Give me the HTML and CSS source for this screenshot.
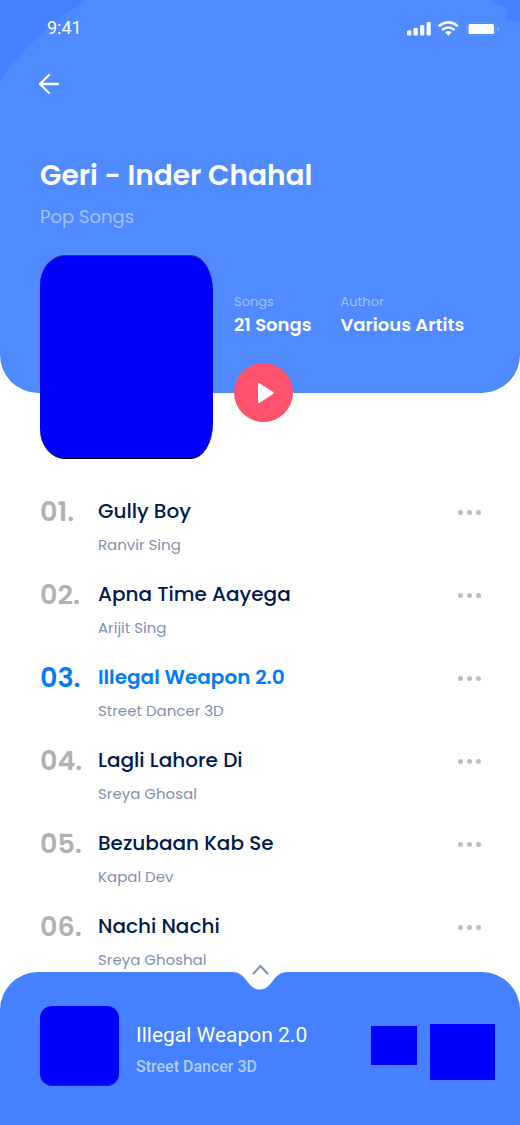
FILE: index.html
```html
<!DOCTYPE html>
<html lang="en">
<head>
<meta charset="utf-8">
<meta name="viewport" content="width=device-width, initial-scale=1">
<title>Geri - Inder Chahal</title>
<link rel="stylesheet" href="styles.css">
</head>
<body>
<div class="app">
  <header class="hero">
    <svg class="corner corner-left" width="86" height="82" viewBox="0 0 86 82" aria-hidden="true"><path d="M0 0H86C53 21 23 47 0 81Z" fill="#4480ff"/></svg>
    <svg class="corner corner-right" width="30" height="22" viewBox="0 0 30 22" aria-hidden="true"><path d="M0 0C3 5 12 3 15 8C18 13 14 19 19 21H30V0Z" fill="#4480ff"/></svg>
    <div class="status">
      <span class="time">9:41</span>
      <svg class="status-icons" width="94" height="16" viewBox="0 0 94 16" aria-hidden="true">
        <g fill="#fff">
          <rect x="1" y="9.500" width="4.300" height="5" rx="1"/>
          <rect x="7.500" y="7" width="4.300" height="7.500" rx="1"/>
          <rect x="14" y="4" width="4.300" height="10.500" rx="1"/>
          <rect x="20.500" y="1" width="4.300" height="13.500" rx="1"/>
          <path d="M39 11.200Q42.300 9 45.600 11.200L42.300 14.800Z"/>
          <rect x="62.500" y="3" width="25.500" height="10" rx="1.500"/>
        </g>
        <path d="M32.800 5.200Q42.300-2.400 51.800 5.200M36 9Q42.300 4 48.600 9" fill="none" stroke="#fff" stroke-width="2.500"/>
        <rect x="60.500" y="1.500" width="29" height="13" rx="3" fill="none" stroke="#fff" stroke-opacity=".12"/>
        <path d="M91.500 5.500Q94.500 8 91.500 10.500Z" fill="#fff" fill-opacity=".4"/>
      </svg>
    </div>
    <button class="back" type="button" aria-label="Back">
      <svg width="22" height="22" viewBox="0 0 22 22" aria-hidden="true"><path d="M20 11H2M11 2L2 11L11 20" fill="none" stroke="#fff" stroke-width="2.300" stroke-linecap="round" stroke-linejoin="round"/></svg>
    </button>
    <h1 class="album-title">Geri - Inder Chahal</h1>
    <p class="genre">Pop Songs</p>
    <div class="album">
      <div class="cover" role="img" aria-label="Album cover"></div>
      <div class="album-info">
        <dl class="facts">
          <div class="fact"><dt>Songs</dt><dd>21 Songs</dd></div>
          <div class="fact"><dt>Author</dt><dd>Various Artits</dd></div>
        </dl>
        <button class="play" type="button" aria-label="Play album">
          <svg width="18" height="22" viewBox="0 0 18 22" aria-hidden="true"><path d="M2 2V20L16 11Z" fill="#fff" stroke="#fff" stroke-width="2" stroke-linejoin="round"/></svg>
        </button>
      </div>
    </div>
  </header>

  <main>
    <ol class="tracks">
      <li class="track"><span class="number">01.</span><div class="song"><h2>Gully Boy</h2><p>Ranvir Sing</p></div><button class="more" type="button" aria-label="More options for Gully Boy"><i></i><i></i><i></i></button></li>
      <li class="track"><span class="number">02.</span><div class="song"><h2>Apna Time Aayega</h2><p>Arijit Sing</p></div><button class="more" type="button" aria-label="More options for Apna Time Aayega"><i></i><i></i><i></i></button></li>
      <li class="track current"><span class="number">03.</span><div class="song"><h2>Illegal Weapon 2.0</h2><p>Street Dancer 3D</p></div><button class="more" type="button" aria-label="More options for Illegal Weapon 2.0"><i></i><i></i><i></i></button></li>
      <li class="track"><span class="number">04.</span><div class="song"><h2>Lagli Lahore Di</h2><p>Sreya Ghosal</p></div><button class="more" type="button" aria-label="More options for Lagli Lahore Di"><i></i><i></i><i></i></button></li>
      <li class="track"><span class="number">05.</span><div class="song"><h2>Bezubaan Kab Se</h2><p>Kapal Dev</p></div><button class="more" type="button" aria-label="More options for Bezubaan Kab Se"><i></i><i></i><i></i></button></li>
      <li class="track"><span class="number">06.</span><div class="song"><h2>Nachi Nachi</h2><p>Sreya Ghoshal</p></div><button class="more" type="button" aria-label="More options for Nachi Nachi"><i></i><i></i><i></i></button></li>
    </ol>
  </main>

  <footer class="player">
    <button class="expand" type="button" aria-label="Open player">
      <svg width="56" height="28" viewBox="0 0 56 28" aria-hidden="true">
        <path d="M0 10C15 10 15 27.500 28 27.500C41 27.500 40 10 56 10V9H0Z" fill="#fff"/>
        <path d="M21.500 11.500L28.500 4L35.500 11.500" fill="none" stroke="#8190b0" stroke-width="2" stroke-linecap="round"/>
      </svg>
    </button>
    <div class="thumb" role="img" aria-label="Album cover"></div>
    <div class="now">
      <p class="now-title">Illegal Weapon 2.0</p>
      <p class="now-album">Street Dancer 3D</p>
    </div>
    <div class="controls">
      <button class="pause" type="button" aria-label="Pause"></button>
      <button class="next" type="button" aria-label="Next"></button>
    </div>
  </footer>
</div>
</body>
</html>
```

FILE: styles.css
```css
* {
  box-sizing: border-box;
}

body,
h1,
h2,
p,
dl,
dd,
ol {
  margin: 0;
  padding: 0;
}

body {
  background: #fff;
  color: #001a4f;
  font-family: Poppins, Inter, sans-serif;
}

button {
  display: flex;
  align-items: center;
  justify-content: center;
  padding: 0;
  border: 0;
  background: none;
  cursor: pointer;
}

.app {
  display: flex;
  flex-direction: column;
  min-height: 100vh;
}

.hero {
  position: relative;
  display: flex;
  flex-direction: column;
  padding: 0 20px 0 40px;
  border-radius: 0 0 38px 38px;
  background: #4f8aff;
  color: #fff;
}

.corner {
  position: absolute;
  top: 0;
}

.corner-left {
  left: 0;
}

.corner-right {
  right: 0;
}

.status {
  position: relative;
  display: flex;
  align-items: center;
  justify-content: space-between;
  height: 56px;
  padding-left: 7px;
}

.time {
  font: 18px/24px Roboto, sans-serif;
}

.status-icons {
  margin-top: 2px;
}

.back {
  position: relative;
  align-self: flex-start;
  width: 40px;
  height: 40px;
  margin: 8px 0 0 -11px;
}

.album-title {
  margin-top: 52px;
  font-size: 28px;
  line-height: 40px;
  font-weight: 600;
}

.genre {
  margin-top: 8px;
  color: #a2c1ff;
  font-size: 18px;
  line-height: 26px;
}

.album {
  display: flex;
  gap: 21px;
  margin: 25px 0 -66px;
}

.cover {
  flex: none;
  width: 173px;
  height: 204px;
  border-top: 1px solid #263b70;
  border-bottom: 1px solid #060616;
  border-radius: 25px 22px 22px 25px / 30px 36px 36px 30px;
  background: #00f;
}

.album-info {
  display: flex;
  flex-direction: column;
  justify-content: space-between;
  padding: 38px 0 37px;
}

.facts {
  display: flex;
  gap: 29px;
  white-space: nowrap;
}

.fact dt {
  color: #a2c1ff;
  font-size: 13px;
  line-height: 18px;
}

.fact dd {
  font-size: 18px;
  line-height: 28px;
  font-weight: 600;
}

.play {
  width: 59px;
  height: 59px;
  padding-left: 4px;
  border-radius: 50%;
  background: #ff526d;
}

.tracks {
  display: flex;
  flex-direction: column;
  gap: 21px;
  margin-top: 102px;
  padding: 0 33px 0 40px;
  list-style: none;
}

.track {
  display: grid;
  grid-template-columns: 58px 1fr 36px;
  align-items: start;
}

.number {
  color: #b1b1b1;
  font-size: 27px;
  line-height: 34px;
  font-weight: 600;
}

.song h2 {
  font-size: 20px;
  line-height: 32px;
  font-weight: 500;
}

.song p {
  margin-top: 6px;
  color: #8190b0;
  font-size: 15px;
  line-height: 24px;
}

.current .number,
.current h2 {
  color: #007aff;
}

.current h2 {
  font-weight: 600;
}

.more {
  gap: 4px;
  height: 34px;
}

.more i {
  width: 5px;
  height: 5px;
  border-radius: 50%;
  background: #bebebe;
}

.player {
  position: relative;
  display: flex;
  align-items: flex-start;
  margin-top: auto;
  padding: 34px 25px 39px 40px;
  border-radius: 38px 38px 0 0;
  background: #4480ff;
}

.expand {
  position: absolute;
  top: -10px;
  left: 50%;
  margin-left: -28px;
}

.thumb {
  flex: none;
  width: 79px;
  height: 80px;
  border-bottom: 1px solid #17309d;
  border-radius: 12px;
  background: #00f;
}

.now {
  flex: 1;
  padding: 14px 0 0 17px;
  font-family: Roboto, sans-serif;
}

.now-title {
  color: #fff;
  font-size: 21px;
  line-height: 30px;
}

.now-album {
  margin-top: 4px;
  color: #b4cdff;
  font-size: 16px;
  line-height: 26px;
  font-weight: 500;
}

.controls {
  display: flex;
  align-items: flex-start;
  gap: 13px;
  padding-top: 18px;
}

.pause,
.next {
  background: #00f;
}

.pause {
  width: 46px;
  height: 39px;
  margin-top: 2px;
}

.next {
  width: 65px;
  height: 56px;
}
```
